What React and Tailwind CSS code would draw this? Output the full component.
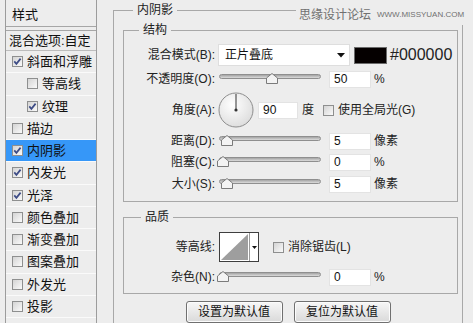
import React from 'react';

const STYLES = [
  { label: '斜面和浮雕', on: true },
  { label: '等高线', on: false, sub: true },
  { label: '纹理', on: true, sub: true },
  { label: '描边', on: false },
  { label: '内阴影', on: true, active: true },
  { label: '内发光', on: true },
  { label: '光泽', on: true },
  { label: '颜色叠加', on: false },
  { label: '渐变叠加', on: false },
  { label: '图案叠加', on: false },
  { label: '外发光', on: false },
  { label: '投影', on: false },
];

function Check({ on }) {
  return (
    <span className="w-[11px] h-[11px] shrink-0 border border-[#8e8f8f] bg-linear-to-br from-[#d4d4d4] to-[#fafafa] flex items-center justify-center">
      {on && (
        <svg width="9" height="9" viewBox="0 0 9 9">
          <path d="M1.3 4.4 L3.4 6.9 L7.6 1.6" fill="none" stroke="#3d4c86" strokeWidth="1.7" />
        </svg>
      )}
    </span>
  );
}

function Label({ children }) {
  return <div className="w-[91px] shrink-0 text-right text-[12px] leading-[16px] text-[#222]">{children}</div>;
}

function Field({ value, className = 'w-[42px]' }) {
  return (
    <div className={`${className} h-[17px] shrink-0 bg-white border border-[#e3e3e3] pl-[4px] text-[12px] leading-[15px] text-[#111]`}>
      {value}
    </div>
  );
}

function Slider({ thumb }) {
  return (
    <div className="relative w-[102px] h-[20px] shrink-0 ml-[4px]">
      <div className="mt-[5px] h-[5px] rounded-full border border-[#8f8f8f] bg-linear-to-b from-[#a4a4a4] to-[#dcdcdc]" />
      {/* thumb */}
      <svg className={`absolute top-[4px] ${thumb}`} width="12" height="11" viewBox="0 0 12 11">
        <path d="M6 0.5 L11.5 5 L11.5 10.5 L0.5 10.5 L0.5 5 Z" fill="#f3f3f3" stroke="#7b7b7b" />
      </svg>
    </div>
  );
}

function SliderRow({ label, value, unit, thumb, className }) {
  return (
    <div className={`flex items-center h-[20px] ${className}`}>
      <Label>{label}</Label>
      <Slider thumb={thumb} />
      <div className="ml-[8px]">
        <Field value={value} />
      </div>
      <span className="ml-[3px] text-[12px] leading-[16px] text-[#222]">{unit}</span>
    </div>
  );
}

function Button({ children }) {
  return (
    <button className="w-[97px] h-[22px] rounded-[3px] border border-[#707070] bg-linear-to-b from-[#f7f7f7] to-[#d9d9d9] text-[12px] leading-[16px] text-[#111] shadow-[inset_0_0_0_1px_#fcfcfc]">
      {children}
    </button>
  );
}

export default function App() {
  return (
    <div className="relative w-[473px] h-[323px] overflow-hidden flex bg-[#ededed] text-[#111] font-['Liberation_Sans','Noto_Sans_CJK_SC',sans-serif]">
      {/* left style list */}
      <div className="ml-[5px] w-[92px] h-full shrink-0 border-x border-[#9c9c9c]">
        <div className="h-[27px] border-b border-[#a6a6a6] pl-[6px] pt-[6px] text-[13px] leading-[17px]">样式</div>
        <div className="mt-[3px] border-t border-[#a6a6a6]">
          <div className="h-[20px] flex items-center pl-[3px] border-b border-[#bcbcbc] text-[13px] leading-[17px]">
            混合选项:自定
          </div>
          {STYLES.map((s) => (
            <div
              key={s.label}
              className={`h-[22.25px] flex items-center border-b border-[#fafafa] text-[13px] leading-[17px] ${
                s.sub ? 'pl-[21px]' : 'pl-[6px]'
              } ${s.active ? 'bg-[#3697f8]' : ''}`}
            >
              <Check on={s.on} />
              <span className="ml-[4px]">{s.label}</span>
            </div>
          ))}
        </div>
      </div>

      {/* right settings */}
      <fieldset className="ml-[16px] mt-[2px] w-[350px] h-[340px] shrink-0 border border-[#a8a8a8]">
        <legend className="ml-[19px] px-[4px] text-[12px] leading-[16px] text-[#222]">内阴影</legend>

        <fieldset className="mt-[4px] ml-[9px] mr-[4px] border border-[#a8a8a8] pt-[6px] pb-[7px]">
          <legend className="ml-[15px] px-[4px] text-[12px] leading-[16px] text-[#222]">结构</legend>

          <div className="flex items-center h-[22px]">
            <Label>混合模式(B):</Label>
            <div className="ml-[3px] w-[132px] h-[22px] shrink-0 bg-white border border-[#dedede] flex items-center justify-between pl-[6px] pr-[4px] text-[12px] leading-[16px]">
              <span>正片叠底</span>
              <svg width="8" height="5" viewBox="0 0 8 5">
                <path d="M0 0 H8 L4 4.5 Z" fill="#111" />
              </svg>
            </div>
            <div className="ml-[4px] w-[33px] h-[17px] shrink-0 bg-[#050000] border border-[#6b6b6b]" />
            <span className="ml-[3px] text-[16px] leading-[18px] text-[#222]">#000000</span>
          </div>

          <SliderRow className="mt-[3px]" label="不透明度(O):" value="50" unit="%" thumb="left-[47px]" />

          <div className="mt-[3px] flex items-center h-[36px]">
            <Label>角度(A):</Label>
            <svg className="ml-[3px] shrink-0" width="36" height="36" viewBox="0 0 36 36">
              <defs>
                <radialGradient id="dial" cx="0.4" cy="0.35" r="0.7">
                  <stop offset="0" stopColor="#ffffff" />
                  <stop offset="1" stopColor="#dcdcdc" />
                </radialGradient>
              </defs>
              <circle cx="18" cy="18" r="17" fill="url(#dial)" stroke="#8d8d8d" />
              <line x1="18" y1="18" x2="18" y2="2" stroke="#333" strokeWidth="1" />
              <circle cx="18" cy="18" r="1.6" fill="#333" />
            </svg>
            <div className="ml-[4px]">
              <Field value="90" className="w-[40px]" />
            </div>
            <span className="ml-[4px] text-[12px] leading-[16px] text-[#222]">度</span>
            <div className="ml-[9px]">
              <Check on={false} />
            </div>
            <span className="ml-[4px] text-[12px] leading-[16px] text-[#222]">使用全局光(G)</span>
          </div>

          <SliderRow className="mt-[3px]" label="距离(D):" value="5" unit="像素" thumb="left-[2px]" />
          <SliderRow className="mt-[1px]" label="阻塞(C):" value="0" unit="%" thumb="left-[-2px]" />
          <SliderRow className="mt-[2px]" label="大小(S):" value="5" unit="像素" thumb="left-[2px]" />
        </fieldset>

        <fieldset className="mt-[7px] ml-[9px] mr-[4px] border border-[#a8a8a8] pt-[7px] pb-[6px]">
          <legend className="ml-[17px] px-[4px] text-[12px] leading-[16px] text-[#222]">品质</legend>

          <div className="flex items-center h-[30px]">
            <Label>等高线:</Label>
            <div className="ml-[4px] w-[40px] h-[30px] shrink-0 flex border border-[#3e3e3e] bg-white">
              <svg width="29" height="28" viewBox="0 0 29 28">
                <polygon points="1,27 28,1 28,27" fill="#9e9e9e" />
              </svg>
              <div className="flex-1 border-l border-[#9a9a9a] flex items-center justify-center">
                <svg width="5" height="3" viewBox="0 0 5 3">
                  <path d="M0 0 H5 L2.5 3 Z" fill="#111" />
                </svg>
              </div>
            </div>
            <div className="ml-[14px]">
              <Check on={false} />
            </div>
            <span className="ml-[4px] text-[12px] leading-[16px] text-[#222]">消除锯齿(L)</span>
          </div>

          <SliderRow className="mt-[5px]" label="杂色(N):" value="0" unit="%" thumb="left-[-2px]" />
        </fieldset>

        <div className="mt-[7px] flex justify-center gap-[11px]">
          <Button>设置为默认值</Button>
          <Button>复位为默认值</Button>
        </div>
      </fieldset>

      {/* watermark */}
      <div className="absolute top-[5px] left-[296px] h-[20px] pl-[3px] pr-[1px] bg-[#ededed] flex items-center gap-[6px] text-[#707070]">
        <span className="text-[12px] leading-[16px]">思缘设计论坛</span>
        <span className="text-[8px] leading-[10px]">WWW.MISSYUAN.COM</span>
      </div>
    </div>
  );
}
